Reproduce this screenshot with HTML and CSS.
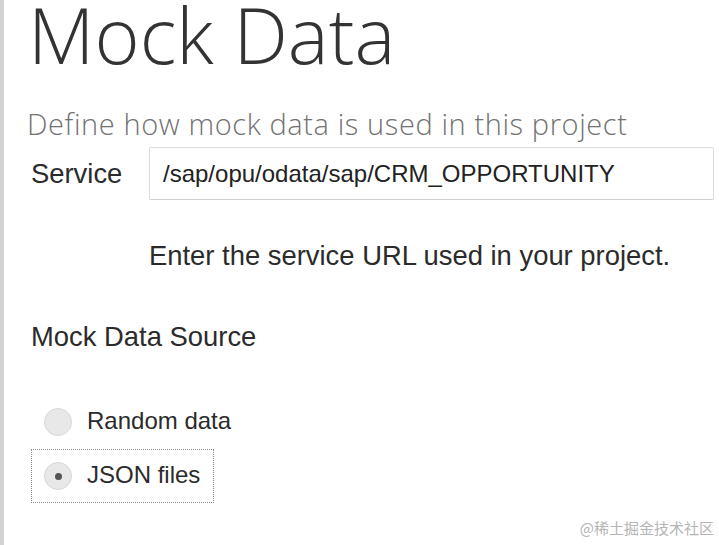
FILE: index.html
```html
<!DOCTYPE html>
<html lang="en">
<head>
  <meta charset="UTF-8">
  <title>Mock Data</title>
  <link rel="stylesheet" href="styles.css">
</head>
<body>
  <div class="side-bar"></div>

  <div class="page">
    <h1 class="page-title">Mock Data</h1>
    <p class="page-subtitle">Define how mock data is used in this project</p>

    <div class="form">
      <div class="field-row">
        <label class="field-label" for="service">Service</label>
        <input class="field-input" id="service" type="text" value="/sap/opu/odata/sap/CRM_OPPORTUNITY">
      </div>
      <p class="field-help">Enter the service URL used in your project.</p>

      <h2 class="section-title">Mock Data Source</h2>

      <div class="radio-group">
        <label class="radio-row">
          <span class="radio"></span>
          <span class="radio-text">Random data</span>
        </label>
        <label class="radio-row focused">
          <span class="radio checked"></span>
          <span class="radio-text">JSON files</span>
        </label>
      </div>
    </div>
  </div>

  <div class="watermark">@稀土掘金技术社区</div>
</body>
</html>
```

FILE: styles.css
```css
body {
  margin: 0;
  height: 545px;
  background: white;
  display: flex;
  overflow: hidden;
  font-family: 'Liberation Sans', Arial, sans-serif;
  color: #2b2b2b;
}

.side-bar {
  width: 4px;
  flex-shrink: 0;
  background: #d2d2d2;
}

.page {
  flex: 1;
  padding-left: 20px;
}

.page-title {
  margin: 0;
  padding-left: 4px;
  font-family: 'Open Sans', sans-serif;
  font-weight: 300;
  font-size: 77px;
  line-height: 70px;
  color: #333;
}

.page-subtitle {
  margin: 37px 0 0;
  padding-left: 3px;
  font-family: 'Open Sans', sans-serif;
  font-weight: 300;
  font-size: 29px;
  line-height: 34px;
  letter-spacing: 0.6px;
  color: #727272;
}

.form {
  padding-left: 7px;
}

.field-row {
  display: flex;
  align-items: center;
  margin-top: 6px;
}

.field-label {
  width: 118px;
  font-size: 27.4px;
}

.field-input {
  box-sizing: border-box;
  width: 565px;
  height: 53px;
  padding: 0 13px;
  border: 1px solid #dcdcdc;
  border-bottom-color: #d0d0d0;
  border-radius: 2px;
  font-family: 'Liberation Sans', Arial, sans-serif;
  font-size: 24px;
  color: #222;
  outline: none;
}

.field-help {
  margin: 40px 0 0 118px;
  font-size: 27.4px;
}

.section-title {
  margin: 49px 0 0;
  font-size: 27.4px;
  font-weight: normal;
}

.radio-group {
  margin-top: 42px;
  display: flex;
  flex-direction: column;
  align-items: flex-start;
}

.radio-row {
  box-sizing: border-box;
  height: 54px;
  padding: 0 13px 0 12px;
  display: flex;
  align-items: center;
  gap: 15px;
  border: 1px solid transparent;
  font-size: 24px;
}

.radio-row.focused {
  border: 1px dotted #8a8a8a;
}

.radio {
  box-sizing: border-box;
  width: 28px;
  height: 28px;
  border-radius: 50%;
  background: #e8e8e8;
  border: 1px solid #d8d8d8;
  display: flex;
  align-items: center;
  justify-content: center;
}

.radio.checked::after {
  content: '';
  width: 7px;
  height: 7px;
  border-radius: 50%;
  background: #555;
}

.radio-text {
  position: relative;
  top: -1px;
}

.watermark {
  position: absolute;
  right: 5px;
  bottom: 7px;
  font-family: 'Noto Sans CJK SC', sans-serif;
  font-size: 15px;
  color: #b4b4b4;
}
```
